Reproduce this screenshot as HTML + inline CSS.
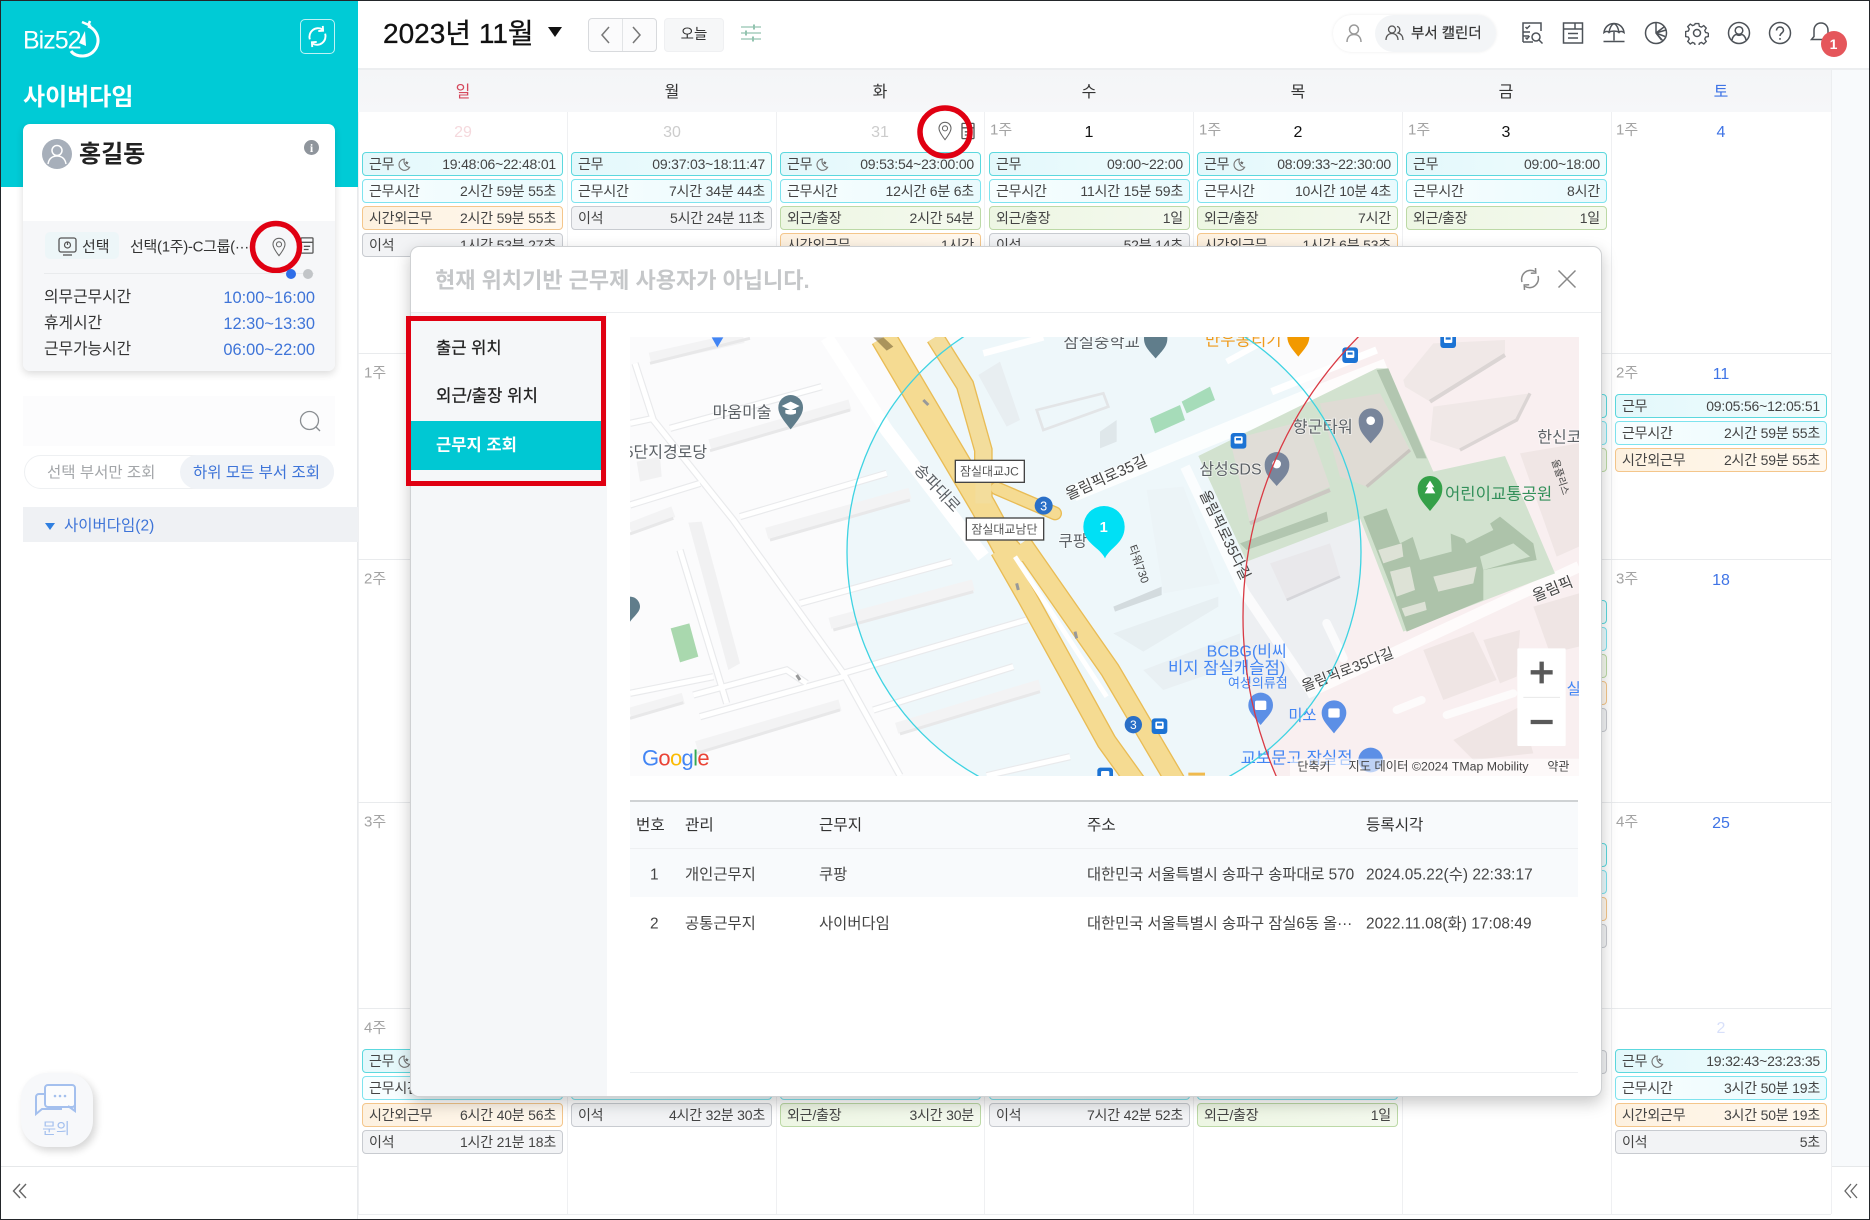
<!DOCTYPE html>
<html lang="ko"><head><meta charset="utf-8"><title>Biz52</title>
<style>
*{box-sizing:border-box}
html,body{margin:0;padding:0}
body{width:1870px;height:1220px;position:relative;overflow:hidden;background:#fff;font-family:"Liberation Sans","Noto Sans CJK KR",sans-serif;color:#333}
.a{position:absolute}
.t{position:absolute;white-space:nowrap;line-height:1;transform:translateY(calc(-50% + 2px))}
.c{transform:translate(-50%,calc(-50% + 2px))}
.e{position:absolute;height:24px;width:201px;display:flex;justify-content:space-between;align-items:center;padding:0 6px 0 6px;border-radius:4px;font-size:14px;color:#444;border:1.5px solid;white-space:nowrap;letter-spacing:-.2px}
.e span{display:flex;align-items:center;gap:2px}
.e svg{width:15px;height:15px}
.w{border-color:#5cd8de;background:linear-gradient(90deg,#e3f8fb,#f0fcfd)}
.h{border-color:#7ee3ee;background:linear-gradient(90deg,#f8feff,#e9fafd)}
.o{border-color:#f4c68b;background:linear-gradient(90deg,#fdf1e0,#fff8ee)}
.g{border-color:#bcd9a6;background:linear-gradient(90deg,#edf6e3,#f4f9ee)}
.i{border-color:#c8cbd0;background:#f2f3f5}
.sat{width:212px}
.wk{position:absolute;font-size:15px;color:#a3a3a3;line-height:1;transform:translateY(calc(-50% + 1px))}
.n{position:absolute;font-size:16px;line-height:1;transform:translate(-50%,calc(-50% + 2px));white-space:nowrap}
.vl{position:absolute;top:112px;bottom:6px;width:1px;background:#eff0f2}
.hl{position:absolute;left:358px;width:1473px;height:1px;background:#e9ebed}
.dn{position:absolute;top:91px;font-size:16px;transform:translate(-50%,calc(-50% + 2px));line-height:1;color:#333}
.hi{position:absolute;top:21px;width:24px;height:24px}
.hi *{fill:none;stroke:#4d5258;stroke-width:1.5}
.th{font-size:15.6px;color:#333}
.td{font-size:15.4px;color:#444}
</style></head><body>
<svg width="0" height="0" style="position:absolute"><defs>
<symbol id="moon" viewBox="0 0 16 16"><path d="M9 2.2A6 6 0 1 0 14.5 11 6.5 6.5 0 0 1 9 2.2Z" fill="none" stroke="#777" stroke-width="1.2"/><path d="M11.5 4l.6 1.4 1.5.1-1.1 1 .4 1.5-1.4-.8-1.3.8.3-1.5-1.1-1 1.5-.1Z" fill="#666"/></symbol>
<symbol id="pin" viewBox="0 0 24 30" preserveAspectRatio="none"><path d="M12 2C6.5 2 3 6 3 11c0 6 9 17 9 17s9-11 9-17c0-5-3.500-9-9-9Z" fill="none" stroke="#666" stroke-width="1.6"/><circle cx="12" cy="11" r="3.800" fill="none" stroke="#666" stroke-width="1.6"/></symbol>
<symbol id="doc" viewBox="0 0 20 24"><rect x="2.500" y="2.500" width="15" height="19" fill="none" stroke="#555" stroke-width="1.6" rx="1"/><path d="M2.500 8H17.500M6 13H14M6 17H12" stroke="#555" stroke-width="1.6" fill="none"/></symbol>
</defs></svg>

<!-- calendar -->
<div class="a" style="left:358px;top:69px;width:1473px;height:43px;background:linear-gradient(#f4f5f7,#f6f7f9)"></div>
<div class="a" style="left:1831px;top:69px;width:39px;height:1097px;background:#f8fafc"></div>
<div class="a" style="left:1831px;top:1166px;width:39px;height:1px;background:#e6e8ea"></div>
<div class="a" style="left:1831px;top:69px;width:1px;height:1097px;background:#eceef0"></div>
<div class="a" style="left:358px;top:68px;width:1512px;height:2px;background:#eceef0"></div>
<div class="vl" style="left:358px"></div><div class="vl" style="left:567px"></div><div class="vl" style="left:776px"></div><div class="vl" style="left:984px"></div><div class="vl" style="left:1193px"></div><div class="vl" style="left:1402px"></div><div class="vl" style="left:1611px"></div><div class="vl" style="left:1831px"></div>
<div class="hl" style="top:353px"></div><div class="hl" style="top:559px"></div><div class="hl" style="top:802px"></div><div class="hl" style="top:1008px"></div>
<div class="a" style="left:358px;top:1214px;width:1473px;height:1px;background:#eceef0"></div>

<div class="dn" style="left:463px;color:#d5485c">일</div><div class="dn" style="left:672px">월</div><div class="dn" style="left:880px">화</div><div class="dn" style="left:1089px">수</div><div class="dn" style="left:1298px">목</div><div class="dn" style="left:1506px">금</div><div class="dn" style="left:1721px;color:#3f74e6">토</div>

<div class="n" style="left:463px;top:131px;color:#f5d9dd">29</div><div class="n" style="left:672px;top:131px;color:#ccc">30</div><div class="n" style="left:880px;top:131px;color:#ccc">31</div>
<div class="wk" style="left:990px;top:129px">1주</div><div class="n" style="left:1089px;top:131px;color:#111">1</div>
<div class="wk" style="left:1199px;top:129px">1주</div><div class="n" style="left:1298px;top:131px;color:#111">2</div>
<div class="wk" style="left:1408px;top:129px">1주</div><div class="n" style="left:1506px;top:131px;color:#111">3</div>
<div class="wk" style="left:1616px;top:129px">1주</div><div class="n" style="left:1721px;top:131px;color:#3f74e6">4</div>
<div class="wk" style="left:1616px;top:372px">2주</div><div class="n" style="left:1721px;top:373px;color:#3f74e6">11</div>
<div class="wk" style="left:1616px;top:578px">3주</div><div class="n" style="left:1721px;top:579px;color:#3f74e6">18</div>
<div class="wk" style="left:1616px;top:821px">4주</div><div class="n" style="left:1721px;top:822px;color:#3f74e6">25</div>
<div class="n" style="left:1721px;top:1027px;color:#d8e0fa">2</div>
<div class="wk" style="left:364px;top:372px">1주</div><div class="wk" style="left:364px;top:578px">2주</div><div class="wk" style="left:364px;top:821px">3주</div><div class="wk" style="left:364px;top:1027px">4주</div>

<!-- row 1 -->
<div class="e w" style="left:362px;top:152px"><span>근무<svg><use href="#moon"/></svg></span><span>19:48:06~22:48:01</span></div>
<div class="e h" style="left:362px;top:179px"><span>근무시간</span><span>2시간 59분 55초</span></div>
<div class="e o" style="left:362px;top:206px"><span>시간외근무</span><span>2시간 59분 55초</span></div>
<div class="e i" style="left:362px;top:233px"><span>이석</span><span>1시간 53분 27초</span></div>
<div class="e w" style="left:571px;top:152px"><span>근무</span><span>09:37:03~18:11:47</span></div>
<div class="e h" style="left:571px;top:179px"><span>근무시간</span><span>7시간 34분 44초</span></div>
<div class="e i" style="left:571px;top:206px"><span>이석</span><span>5시간 24분 11초</span></div>
<div class="e w" style="left:780px;top:152px"><span>근무<svg><use href="#moon"/></svg></span><span>09:53:54~23:00:00</span></div>
<div class="e h" style="left:780px;top:179px"><span>근무시간</span><span>12시간 6분 6초</span></div>
<div class="e g" style="left:780px;top:206px"><span>외근/출장</span><span>2시간 54분</span></div>
<div class="e o" style="left:780px;top:233px"><span>시간외근무</span><span>1시간</span></div>
<div class="e w" style="left:989px;top:152px"><span>근무</span><span>09:00~22:00</span></div>
<div class="e h" style="left:989px;top:179px"><span>근무시간</span><span>11시간 15분 59초</span></div>
<div class="e g" style="left:989px;top:206px"><span>외근/출장</span><span>1일</span></div>
<div class="e i" style="left:989px;top:233px"><span>이석</span><span>52분 14초</span></div>
<div class="e w" style="left:1197px;top:152px"><span>근무<svg><use href="#moon"/></svg></span><span>08:09:33~22:30:00</span></div>
<div class="e h" style="left:1197px;top:179px"><span>근무시간</span><span>10시간 10분 4초</span></div>
<div class="e g" style="left:1197px;top:206px"><span>외근/출장</span><span>7시간</span></div>
<div class="e o" style="left:1197px;top:233px"><span>시간외근무</span><span>1시간 6분 53초</span></div>
<div class="e w" style="left:1406px;top:152px"><span>근무</span><span>09:00~18:00</span></div>
<div class="e h" style="left:1406px;top:179px"><span>근무시간</span><span>8시간</span></div>
<div class="e g" style="left:1406px;top:206px"><span>외근/출장</span><span>1일</span></div>
<!-- sat week 2 -->
<div class="e w sat" style="left:1615px;top:394px"><span>근무</span><span>09:05:56~12:05:51</span></div>
<div class="e h sat" style="left:1615px;top:421px"><span>근무시간</span><span>2시간 59분 55초</span></div>
<div class="e o sat" style="left:1615px;top:448px"><span>시간외근무</span><span>2시간 59분 55초</span></div>
<!-- peeks fri -->
<div class="e w" style="left:1406px;top:394px"></div><div class="e h" style="left:1406px;top:421px"></div><div class="e g" style="left:1406px;top:448px"></div>
<div class="e w" style="left:1406px;top:600px"></div><div class="e h" style="left:1406px;top:627px"></div><div class="e g" style="left:1406px;top:654px"></div><div class="e o" style="left:1406px;top:681px"></div><div class="e i" style="left:1406px;top:708px"></div>
<div class="e w" style="left:1406px;top:843px"></div><div class="e h" style="left:1406px;top:870px"></div><div class="e o" style="left:1406px;top:897px"></div><div class="e i" style="left:1406px;top:924px"></div>
<div class="e i" style="left:1406px;top:1050px"></div>
<!-- week 5 -->
<div class="e w" style="left:362px;top:1049px"><span>근무<svg><use href="#moon"/></svg></span><span></span></div>
<div class="e h" style="left:362px;top:1076px"><span>근무시간</span></div>
<div class="e o" style="left:362px;top:1103px"><span>시간외근무</span><span>6시간 40분 56초</span></div>
<div class="e i" style="left:362px;top:1130px"><span>이석</span><span>1시간 21분 18초</span></div>
<div class="e h" style="left:571px;top:1076px"></div><div class="e i" style="left:571px;top:1103px"><span>이석</span><span>4시간 32분 30초</span></div>
<div class="e h" style="left:780px;top:1076px"></div><div class="e g" style="left:780px;top:1103px"><span>외근/출장</span><span>3시간 30분</span></div>
<div class="e h" style="left:989px;top:1076px"></div><div class="e i" style="left:989px;top:1103px"><span>이석</span><span>7시간 42분 52초</span></div>
<div class="e h" style="left:1197px;top:1076px"></div><div class="e g" style="left:1197px;top:1103px"><span>외근/출장</span><span>1일</span></div>
<div class="e w sat" style="left:1615px;top:1049px"><span>근무<svg><use href="#moon"/></svg></span><span>19:32:43~23:23:35</span></div>
<div class="e h sat" style="left:1615px;top:1076px"><span>근무시간</span><span>3시간 50분 19초</span></div>
<div class="e o sat" style="left:1615px;top:1103px"><span>시간외근무</span><span>3시간 50분 19초</span></div>
<div class="e i sat" style="left:1615px;top:1130px"><span>이석</span><span>5초</span></div>

<svg class="a" style="left:937px;top:121px" width="16" height="20"><use href="#pin" width="16" height="20"/></svg>
<svg class="a" style="left:960px;top:120px" width="16" height="22" viewBox="0 0 20 24"><use href="#doc"/></svg>
<svg class="a" style="left:917px;top:103px;overflow:visible" width="60" height="58"><ellipse cx="28" cy="29" rx="25" ry="24" fill="none" stroke="#e00012" stroke-width="5.500"/></svg>
<svg class="a" style="left:1843px;top:1182px" width="16" height="18"><path d="M8 2L2 9l6 7M14 2L8 9l6 7" fill="none" stroke="#666" stroke-width="1.300"/></svg>

<!-- header -->
<div class="t" style="left:383px;top:32px;font-size:28px;color:#111;-webkit-text-stroke:.3px #111">2023년 11월</div>
<div class="a" style="left:548px;top:27px;width:0;height:0;border-left:7.500px solid transparent;border-right:7.500px solid transparent;border-top:10px solid #111"></div>
<div class="a" style="left:588px;top:18px;width:69px;height:34px;border:1.500px solid #d8dadd;border-radius:4px;background:#fbfbfc"></div>
<div class="a" style="left:622px;top:19px;width:1px;height:32px;background:#e2e4e6"></div>
<svg class="a" style="left:594px;top:24px" width="54" height="22"><path d="M15 3L8 11l7 8M39 3l7 8-7 8" fill="none" stroke="#777" stroke-width="1.500"/></svg>
<div class="a" style="left:664px;top:18px;width:60px;height:34px;border-radius:4px;background:#f6f7f8;border:1px solid #eff0f2"></div>
<div class="t c" style="left:694px;top:33px;font-size:14.500px;color:#333;position:absolute">오늘</div>
<svg class="a" style="left:739px;top:22px" width="24" height="22" viewBox="0 0 24 22"><path d="M2 5H22M2 11H22M2 17H22" stroke="#93c4b0" stroke-width="1.300"/><path d="M15 2.500V7.500M7 8.500V13.500M14 14.500V19.500" stroke="#93c4b0" stroke-width="2"/></svg>

<div class="a" style="left:1333px;top:15px;width:163px;height:37px;border-radius:19px;background:#fff;box-shadow:0 0 3px rgba(0,0,0,.08)"></div>
<div class="a" style="left:1375px;top:15px;width:121px;height:37px;border-radius:19px;background:#f3f5f7"></div>
<svg class="a" style="left:1345px;top:23px" width="18" height="20" viewBox="0 0 18 20"><circle cx="9" cy="6.500" r="4.500" fill="none" stroke="#999" stroke-width="1.500"/><path d="M2 19c0-5 3-7.500 7-7.500s7 2.500 7 7.500" fill="none" stroke="#999" stroke-width="1.500"/></svg>
<svg class="a" style="left:1385px;top:24px" width="20" height="18" viewBox="0 0 20 18"><circle cx="7" cy="5.500" r="3.500" fill="none" stroke="#555" stroke-width="1.300"/><path d="M1 16c0-4 2.500-6.500 6-6.500s6 2.500 6 6.500" fill="none" stroke="#555" stroke-width="1.300"/><path d="M12 2.500a3.500 3.500 0 0 1 1 6.500c3 .8 5 3 5 7" fill="none" stroke="#555" stroke-width="1.300"/></svg>
<div class="t" style="left:1411px;top:32px;font-size:14.500px;color:#333;-webkit-text-stroke:.2px #333">부서 캘린더</div>

<svg class="hi" style="left:1520px" viewBox="0 0 24 24"><path d="M3 21V2H21V10M3 11H10M3 15H9"/><path d="M5.500 6l1.500 1.500L10 4.500M5.500 16.500L7 18l2.500-3"/><path d="M3 21H13"/><circle cx="16" cy="16" r="4"/><path d="M19 19l3.500 3.500"/></svg>
<svg class="hi" style="left:1561px" viewBox="0 0 24 24"><rect x="2.500" y="2" width="19" height="20"/><path d="M2.500 8H21.500M7 12.500H17M7 17H17M14 2V8"/></svg>
<svg class="hi" style="left:1602px" viewBox="0 0 24 24"><path d="M12 2.500C6 2.500 2.500 7 2 11.500c2-1.500 4-1.500 5 0 1.500-1.800 8.500-1.800 10 0 1-1.500 3-1.500 5 0-.5-4.500-4-9-10-9Z"/><path d="M12 2.500C9 4 7.500 8 7 11.500M12 2.500c3 1.500 4.500 5.500 5 9M12 11v8.500M1.500 20.500H22.500"/></svg>
<svg class="hi" style="left:1644px" viewBox="0 0 24 24"><circle cx="12" cy="12" r="10.500"/><path d="M12 1.500V12l7 8M12 12L22 9M12 12l9 3.500M12 12l5.500 7M12 12l8-6"/></svg>
<svg class="hi" style="left:1685px" viewBox="0 0 24 24"><circle cx="12" cy="12" r="3.500"/><path d="M10 1.500h4l.6 3 2.300 1 2.600-1.700 2.800 2.800-1.700 2.600 1 2.300 3 .6v-.1 3.900l-3 .6-1 2.300 1.700 2.600-2.800 2.800-2.600-1.700-2.300 1-.6 3h-4l-.6-3-2.300-1-2.600 1.700-2.800-2.800 1.700-2.600-1-2.300-3-.6V10.400l3-.6 1-2.300-1.700-2.600 2.800-2.800 2.600 1.700 2.300-1Z" transform="translate(1.200 1.200) scale(.9)"/></svg>
<svg class="hi" style="left:1727px" viewBox="0 0 24 24"><circle cx="12" cy="12" r="10.500"/><circle cx="12" cy="9.500" r="3.800"/><path d="M5 19c.5-3.500 3-5.500 4.500-5.500 1.500 1 3.500 1 5 0C16 13.500 18.500 15.500 19 19"/></svg>
<svg class="hi" style="left:1768px" viewBox="0 0 24 24"><circle cx="12" cy="12" r="10.500"/><path d="M8.500 9.500c0-2 1.500-3.500 3.500-3.500s3.500 1.500 3.500 3.300c0 2.700-3.500 2.700-3.500 5.700"/><path d="M12 17v1.800" stroke-width="2"/></svg>
<svg class="hi" style="left:1809px" viewBox="0 0 24 24"><path d="M12 2c-4.500 0-7 3.500-7 7.500v6L2.500 18.500h19L19 15.500v-6C19 5.500 16.500 2 12 2Z"/></svg>
<div class="a" style="left:1820.500px;top:30.500px;width:26px;height:26px;border-radius:50%;background:#e5565b"></div>
<div class="n" style="left:1833.500px;top:41.500px;color:#fff;font-size:14px;font-weight:700">1</div>

<!-- modal -->
<div class="a" style="left:410px;top:246px;width:1192px;height:851px;background:#fff;border:1px solid #cfd1d3;border-radius:9px;box-shadow:0 6px 16px rgba(0,0,0,.22);overflow:hidden">
  <div class="a" style="left:0;top:65px;right:0;height:1px;background:#eceef0"></div>
  <div class="a" style="left:0;top:66px;width:196px;bottom:0;background:#f5f7f9"></div>
  <div class="a" style="left:0;top:174px;width:195px;height:49px;background:#00c8d3"></div>
</div>
<div class="t" style="left:435px;top:279px;font-size:22px;font-weight:700;color:#c5c7c9">현재 위치기반 근무제 사용자가 아닙니다.</div>
<svg class="a" style="left:1518px;top:267px" width="24" height="24" viewBox="0 0 24 24"><path d="M4 15a9 9 0 0 1 13-10.500M20 9a9 9 0 0 1-13 10.500" fill="none" stroke="#888" stroke-width="1.500"/><path d="M17.500 1l.3 5-5 .3M6.500 23l-.3-5 5-.3" fill="none" stroke="#888" stroke-width="1.500"/></svg>
<svg class="a" style="left:1557px;top:269px" width="20" height="20"><path d="M1.500 1.500l17 17M18.500 1.500l-17 17" stroke="#888" stroke-width="1.500"/></svg>
<div class="t" style="left:436px;top:347px;font-size:16.600px;color:#222;-webkit-text-stroke:.25px #222">출근 위치</div>
<div class="t" style="left:436px;top:395px;font-size:16.800px;color:#222;-webkit-text-stroke:.25px #222">외근/출장 위치</div>
<div class="t" style="left:436px;top:444px;font-size:16.600px;color:#fff;font-weight:700">근무지 조회</div>
<div class="a" style="left:406px;top:316px;width:200px;height:170px;border:5px solid #e00012"></div>

<!-- map -->
<svg class="a" style="left:630px;top:337px;font-family:'Liberation Sans','Noto Sans CJK KR',sans-serif" width="949" height="439" viewBox="630 337 949 439">
<defs>
<style>
.bl{fill:none;stroke:#f3f3f4;stroke-width:34}
.bd{fill:none;stroke:#e8e8e9;stroke-width:9}
.rd{fill:none;stroke:#e9eaec;stroke-width:22}
.rw{fill:none;stroke:#fff;stroke-width:15}
.l{font-size:48px;fill:#5c6166;paint-order:stroke;stroke:#fff;stroke-width:5px;stroke-opacity:.6}
.bu{fill:#1c73d4}
</style>
</defs>
<rect x="630" y="337" width="949" height="439" fill="#fbfbfc"/>
<circle cx="1641" cy="617" r="398" fill="#f6dcdc" fill-opacity=".36"/>
<circle cx="1104" cy="552" r="257" fill="#d6eff6" fill-opacity=".34"/>

<g transform="translate(630 330) scale(.33333)">
 <path class="bl" d="M60 85L340 22M240 345L660 225M410 610L840 490M600 880L1030 765M800 1195L1230 1065M200 1250L630 1125M0 1150L160 1105M0 595L130 545"/>
 <path class="bd" d="M60 100L360 25M240 362L660 240M420 630L840 510M610 900L1030 785M810 1212L1230 1085M200 1270L630 1140M0 1165L160 1118M0 612L130 565"/>
 <path d="M175 578L215 575L330 1000L295 1020Z" fill="#f1f1f2"/>
 <path d="M20 395L90 380L95 440L30 455Z" fill="#f1f1f2"/>
 <path d="M1045 135L1110 95L1170 270L1130 290Z" fill="#e8eef1"/>
 <path d="M122 895L178 880L205 980L150 997Z" fill="#a9d8ae"/>
 <path class="rd" d="M15 100L70 270L310 570L640 1030L810 1337M120 295L575 170M0 280L70 265M0 525L210 460M330 560L770 430M510 820L965 695M640 1030L1190 870M210 1160L640 1040M150 660L290 1120M190 1095L470 1020L530 1060M0 1090L250 1040M730 1140L1150 1010M1070 1337L1320 1280"/>
 <path class="rw" d="M15 100L70 270L310 570L640 1030L810 1337M120 295L575 170M0 280L70 265M0 525L210 460M330 560L770 430M510 820L965 695M640 1030L1190 870M210 1160L640 1040M150 660L290 1120M190 1095L470 1020L530 1060M0 1090L250 1040M730 1140L1150 1010M1070 1337L1320 1280"/>
 <path d="M590 22L770 300L1060 680" fill="none" stroke="#fff" stroke-width="40"/>
 <path d="M1220 240L1420 190L1435 230L1240 300Z" fill="none" stroke="#e3e5e7" stroke-width="8"/>
 <path d="M1060 70L1240 22" fill="none" stroke="#fff" stroke-width="20"/>
 <!-- highway -->
 <path d="M760 22L1060 530L1125 650L1170 700" fill="none" stroke="#e9bc55" stroke-width="80"/>
 <path d="M915 22L1005 165L1060 360L1060 520" fill="none" stroke="#e9bc55" stroke-width="56"/>
 <path d="M1100 475L1275 550" fill="none" stroke="#e9bc55" stroke-width="42" stroke-linecap="round"/>
 <path d="M1110 660L1190 800L1430 1235L1520 1360" fill="none" stroke="#e9bc55" stroke-width="62"/>
 <path d="M1175 640L1440 1020L1640 1360" fill="none" stroke="#e9bc55" stroke-width="62"/>
 <path d="M760 22L1060 530L1125 650L1170 700" fill="none" stroke="#f5db92" stroke-width="72"/>
 <path d="M915 22L1005 165L1060 360L1060 520" fill="none" stroke="#f3dd9c" stroke-width="48"/>
 <path d="M1100 475L1275 550" fill="none" stroke="#f5db92" stroke-width="34" stroke-linecap="round"/>
 <path d="M1110 660L1190 800L1430 1235L1520 1360" fill="none" stroke="#f5db92" stroke-width="54"/>
 <path d="M1175 640L1440 1020L1640 1360" fill="none" stroke="#f5db92" stroke-width="54"/>
 <path d="M1155 680L1430 1100" fill="none" stroke="#fff" stroke-width="14"/>
 <path d="M895 225L880 210M1160 760L1165 780M1335 905L1340 925M500 1035L510 1050" stroke="#98999a" stroke-width="9" fill="none"/>
 <path d="M730 22L760 22L790 50L770 62Z" fill="#6b5a2f" opacity=".55"/>
 <path d="M245 22H280L262 52Z" fill="#4285f4"/>
 <text class="l" x="248" y="262">마움미술</text>
 <path d="M482 298C455 265 445 250 445 232a37 37 0 0 1 74 0C519 250 509 265 482 298Z" fill="#607d8b"/><path d="M455 228l27-13 27 13-27 13Z" fill="#fff"/><path d="M466 240v10q16 8 32 0v-10" fill="#fff"/>
 <text class="l" x="-16" y="382">5단지경로당</text>
 <path d="M-2 880C-5 865 -30 850 -30 830a30 30 0 0 1 60 0C30 850 2 865 -2 880Z" fill="#607d8b"/>
 <text class="l" transform="translate(850 420) rotate(47)">송파대로</text>
 <rect x="976" y="391" width="207" height="66" fill="#fff" stroke="#444" stroke-width="4"/><text x="990" y="437" font-size="36" fill="#555">잠실대교JC</text>
 <rect x="1009" y="564" width="232" height="66" fill="#fff" stroke="#444" stroke-width="4"/><text x="1024" y="610" font-size="36" fill="#555">잠실대교남단</text>
 <circle cx="1241" cy="527" r="27" fill="#2a6fc7"/><text x="1241" y="541" font-size="38" fill="#fff" text-anchor="middle">3</text>
 <text class="l" x="1285" y="650" style="font-size:47px">쿠팡</text>
 <!-- Google -->
 <text x="36" y="1306" font-size="66" style="letter-spacing:-2px;font-weight:400"><tspan fill="#4285f4">G</tspan><tspan fill="#ea4335">o</tspan><tspan fill="#fbbc05">o</tspan><tspan fill="#4285f4">g</tspan><tspan fill="#34a853">l</tspan><tspan fill="#ea4335">e</tspan></text>
</g>

<g transform="translate(1100 330) scale(.33333)">
 <!-- roads -->
 <path d="M-80 490L630 200L860 110" fill="none" stroke="#fff" stroke-width="50" opacity=".8"/>
 <path d="M515 185L830 60" fill="none" stroke="#fff" stroke-width="22"/>
 <path d="M255 410L435 790L630 1080" fill="none" stroke="#fff" stroke-width="30" opacity=".75"/>
 <path d="M620 1090L1437 710" fill="none" stroke="#fff" stroke-width="34" opacity=".75"/>
 <!-- pink buildings -->
 <path d="M910 150L1000 40L1215 30V75L990 215L915 170Z" fill="#f0e8e7"/><path d="M990 215L1215 75" stroke="#dbd5d4" stroke-width="12"/>
 <path d="M990 330L1000 230L1290 190L1250 270L1080 360Z" fill="#f0e8e7"/><path d="M1080 360L1250 270L1290 190" stroke="#dbd5d4" stroke-width="10" fill="none"/>
 <path d="M1260 370L1437 340V650L1370 680Z" fill="#f0e6e5"/>
 <path d="M970 960L1120 905L1190 1050L1030 1110Z" fill="#efe5e4"/>
 <path d="M1150 930L1260 900L1250 1040L1200 1060Z" fill="#efe5e4"/>
 <path d="M1300 830L1437 790V950L1350 970Z" fill="#efe5e4"/>
 <path d="M1060 1230L1260 1130L1300 1270L1120 1290Z" fill="#efe5e4"/>
 <!-- park -->
 <path d="M295 378L830 115H865L1000 425L1215 378L1365 730L910 905L780 565L440 695Z" fill="#d2e2cf"/>
 <path d="M390 330L620 270L690 470L450 580Z" fill="#e0ddd7"/>
 <path d="M450 580L690 480" stroke="#cbc8c2" stroke-width="12" fill="none"/>
 <path d="M660 220L840 190L930 360L800 470L720 440Z" fill="#dfdbd4"/>
 <path d="M800 470L930 360" stroke="#c9c5bf" stroke-width="10"/>
 <path d="M830 120L865 115L980 385L950 385Z" fill="#b2c6b0"/>
 <path d="M420 640L680 545L685 575L440 660Z" fill="#b2c6b0"/>
 <path d="M790 560L860 535L900 640L1000 590L1100 630L1200 560L1300 640L1310 690L1150 720L1150 810L920 905L880 790Z" fill="#adc3aa"/>
 <path d="M930 595L1050 570L1055 665L960 690Z" fill="#d2e2cf"/><path d="M1060 570L1150 540L1180 600L1100 640Z" fill="#d2e2cf"/><path d="M1140 680L1240 640L1290 680L1150 720Z" fill="#d2e2cf"/>
 <path d="M835 660L905 640L910 680L850 700ZM870 725L930 710L945 780L890 800ZM905 835L975 815L980 840L915 860ZM1000 740L1130 710L1120 760L1015 785Z" fill="#dde2d6"/>
 <path d="M510 700L690 640L720 740L560 810Z" fill="#e9e8eb"/>
 <path d="M560 810L720 740" stroke="#d6d6da" stroke-width="8"/>
 <!-- left bldgs -->
 <path d="M150 265L240 225L255 270L165 310Z" fill="#a6dcb9"/><path d="M245 215L330 170L345 210L260 250Z" fill="#a6dcb9"/>
 <path d="M140 480L250 470L360 760L190 790Z" fill="#ecf4f7"/>
 <path d="M40 910L355 800V830L130 965Z" fill="#e7eff2"/>
 <path d="M130 1020L420 910V1000L190 1080Z" fill="#e9f0f3"/>
 <path d="M40 830L185 770V795L45 845Z" fill="#d3dbde"/>
 <path d="M0 305L50 270V335L0 355Z" fill="#dfe7ea"/>
 <path d="M380 95L480 40" stroke="#fff" stroke-width="18"/>
 <path d="M680 880L730 985" stroke="#fff" stroke-width="26" stroke-linecap="round" opacity=".8"/>
 <path d="M890 1140L965 1110M1040 1155L1240 1090" stroke="#fff" stroke-width="24" stroke-linecap="round" opacity=".75"/>
 <!-- labels -->
 <text class="l" x="-110" y="52" style="font-size:50px">잠실중학교</text>
 <path d="M167 85C145 60 132 48 132 25a35 35 0 0 1 70 0C202 48 189 60 167 85Z" fill="#607d8b"/>
 <text x="315" y="47" font-size="50" fill="#f09a1a">만우동티기</text>
 <path d="M595 80C575 55 562 42 562 20a33 33 0 0 1 66 0C628 42 615 55 595 80Z" fill="#f29900"/>
 <text class="l" transform="translate(-95 510) rotate(-24)" style="font-size:46px;fill:#444">올림픽로35길</text>
 <text transform="translate(85 650) rotate(70)" font-size="34" fill="#444">타워730</text>
 <text transform="translate(298 490) rotate(64)" font-size="44" fill="#444">올림픽로35다길</text>
 <text class="l" x="298" y="434">삼성SDS</text>
 <path d="M530 468C505 440 494 430 494 403a37 37 0 0 1 74 0C568 430 555 440 530 468Z" fill="#78859b"/><circle cx="530" cy="402" r="13" fill="#fff"/>
 <text class="l" x="578" y="307" style="font-size:49px">향군타워</text>
 <path d="M812 340C787 312 776 300 776 272a37 37 0 0 1 74 0C850 300 837 312 812 340Z" fill="#78859b"/><circle cx="812" cy="272" r="13" fill="#fff"/>
 <path d="M990 543C964 512 953 500 953 475a37 37 0 0 1 74 0C1027 500 1016 512 990 543Z" fill="#34a048"/><path d="M990 452l13 20h-7l10 18h-32l10-18h-7Z" fill="#fff"/>
 <text x="1035" y="508" font-size="50" fill="#33905a">어린이교통공원</text>
 <text class="l" x="1312" y="338">한신코</text>
 <text transform="translate(1355 392) rotate(72)" font-size="30" fill="#444">올플리스</text>
 <text class="l" transform="translate(1305 815) rotate(-22)" style="font-size:46px;fill:#444">올림픽</text>
 <text class="l" transform="translate(612 1085) rotate(-21)" style="font-size:44px;fill:#444">올림픽로35다길</text>
 <text x="320" y="980" font-size="48" fill="#4285f4">BCBG(비씨</text>
 <text x="204" y="1030" font-size="50" fill="#4285f4">비지 잠실캐슬점)</text>
 <text x="384" y="1072" font-size="39" fill="#4285f4">여성의류점</text>
 <path d="M482 1185C457 1155 445 1145 445 1125a37 37 0 0 1 74 0C519 1145 507 1155 482 1185Z" fill="#5c8fe6"/><rect x="465" y="1112" width="34" height="28" rx="5" fill="#fff"/>
 <text x="565" y="1172" font-size="46" fill="#4285f4">미쏘</text>
 <path d="M702 1210C677 1180 665 1168 665 1148a37 37 0 0 1 74 0C739 1168 727 1180 702 1210Z" fill="#5c8fe6"/><rect x="685" y="1135" width="34" height="28" rx="5" fill="#fff"/>
 <text x="422" y="1300" font-size="50" fill="#4285f4">교보문고 잠실점</text>
 <circle cx="812" cy="1290" r="37" fill="#5c8fe6"/>
 <text x="1400" y="1092" font-size="46" fill="#4285f4">실</text>
 <circle cx="100" cy="1184" r="26" fill="#2a6fc7"/><text x="100" y="1197" font-size="36" fill="#fff" text-anchor="middle">3</text>
 <path d="M265 1337V1328H315V1337Z" fill="#f0ba4e"/>
 <!-- bus -->
 <g><rect x="392" y="309" width="47" height="47" rx="9" class="bu"/><rect x="403" y="319" width="25" height="22" rx="4" fill="#fff"/><rect x="408" y="324" width="15" height="7" fill="#1c73d4"/></g>
 <g transform="translate(335 -257)"><rect x="392" y="309" width="47" height="47" rx="9" class="bu"/><rect x="403" y="319" width="25" height="22" rx="4" fill="#fff"/><rect x="408" y="324" width="15" height="7" fill="#1c73d4"/></g>
 <g transform="translate(629 -302)"><rect x="392" y="309" width="47" height="47" rx="9" class="bu"/><rect x="403" y="319" width="25" height="22" rx="4" fill="#fff"/><rect x="408" y="324" width="15" height="7" fill="#1c73d4"/></g>
 <g transform="translate(-237 856)"><rect x="392" y="309" width="47" height="47" rx="9" class="bu"/><rect x="403" y="319" width="25" height="22" rx="4" fill="#fff"/><rect x="408" y="324" width="15" height="7" fill="#1c73d4"/></g>
 <g transform="translate(-400 1004)"><rect x="392" y="309" width="47" height="47" rx="9" class="bu"/><rect x="403" y="319" width="25" height="22" rx="4" fill="#fff"/></g>
</g>
<circle cx="1104" cy="552" r="257" fill="none" stroke="#3ed3e2" stroke-width="1.300"/>
<circle cx="1641" cy="617" r="398" fill="none" stroke="#d93a44" stroke-width="1.300"/>
<g transform="translate(1100 330) scale(.33333)">
 <path d="M15 685C0 652 -50 640 -50 590a62 62 0 0 1 124 0C74 640 30 652 15 685Z" fill="#00e0f5"/>
 <text x="11" y="606" font-size="44" font-weight="700" fill="#fff" text-anchor="middle">1</text>
 <rect x="570" y="1286" width="867" height="52" fill="#fff" fill-opacity=".6"/>
 <text x="592" y="1322" font-size="36" fill="#444">단축키</text>
 <text x="745" y="1322" font-size="37" fill="#444">지도 데이터 ©2024 TMap Mobility</text>
 <text x="1342" y="1322" font-size="36" fill="#444">약관</text>
 <rect x="1252" y="955" width="145" height="293" fill="#fff" rx="3"/>
 <path d="M1270 1102H1380" stroke="#e8e8e8" stroke-width="3"/>
 <path d="M1292 1027H1358M1325 995V1060M1292 1176H1358" stroke="#595959" stroke-width="13" fill="none"/>
</g>
</svg>

<!-- table -->
<div class="a" style="left:630px;top:800px;width:948px;height:97px;background:#f8fafc"></div>
<div class="a" style="left:630px;top:800px;width:948px;height:2px;background:#cfd2d4"></div>
<div class="a" style="left:630px;top:848px;width:948px;height:1px;background:#eef0f2"></div>
<div class="a" style="left:630px;top:1072px;width:948px;height:1px;background:#eef0f2"></div>
<div class="t th" style="left:636px;top:824px">번호</div><div class="t th" style="left:685px;top:824px">관리</div><div class="t th" style="left:819px;top:824px">근무지</div><div class="t th" style="left:1087px;top:824px">주소</div><div class="t th" style="left:1366px;top:824px">등록시각</div>
<div class="t td" style="left:650px;top:873px">1</div><div class="t td" style="left:685px;top:873px">개인근무지</div><div class="t td" style="left:819px;top:873px">쿠팡</div><div class="t td" style="left:1087px;top:873px;letter-spacing:-.1px">대한민국 서울특별시 송파구 송파대로 570</div><div class="t td" style="left:1366px;top:873px;letter-spacing:.05px">2024.05.22(수) 22:33:17</div>
<div class="t td" style="left:650px;top:922px">2</div><div class="t td" style="left:685px;top:922px">공통근무지</div><div class="t td" style="left:819px;top:922px">사이버다임</div><div class="t td" style="left:1087px;top:922px;letter-spacing:-.1px">대한민국 서울특별시 송파구 잠실6동 올···</div><div class="t td" style="left:1366px;top:922px;letter-spacing:.05px">2022.11.08(화) 17:08:49</div>

<!-- sidebar -->
<div class="a" style="left:0;top:0;width:358px;height:1220px;background:#fff;border-right:1px solid #e8eaec"></div>
<div class="a" style="left:0;top:0;width:358px;height:187px;background:#00cbd6"></div>
<div class="t" style="left:23px;top:39px;font-size:25px;color:#fff;letter-spacing:-1px">Biz52</div>
<svg class="a" style="left:64px;top:18px" width="36" height="42" viewBox="0 0 36 42"><path d="M24 8A15.500 15.500 0 0 1 19 38C13 38 9 36 7 33" fill="none" stroke="#fff" stroke-width="3"/><path d="M18 4L27 8M24 8l2-5" stroke="#fff" stroke-width="2.500" fill="none"/><path d="M21 13l1 15-7-3Z" fill="#fff"/></svg>
<div class="a" style="left:300px;top:19px;width:35px;height:35px;border:1.500px solid rgba(255,255,255,.75);border-radius:5px"></div>
<svg class="a" style="left:306px;top:25px" width="23" height="23" viewBox="0 0 24 24"><path d="M4 15a9 9 0 0 1 13-10.500M20 9a9 9 0 0 1-13 10.500" fill="none" stroke="#fff" stroke-width="2"/><path d="M17.500 1l.3 5-5 .3M6.500 23l-.3-5 5-.3" fill="none" stroke="#fff" stroke-width="2"/></svg>
<div class="t" style="left:23px;top:96px;font-size:24px;font-weight:700;color:#fff">사이버다임</div>

<div class="a" style="left:23px;top:124px;width:312px;height:247px;border-radius:7px;background:#fff;box-shadow:0 3px 8px rgba(0,0,0,.14);overflow:hidden"><div class="a" style="left:0;top:97px;right:0;bottom:0;background:#f6f7f9"></div></div>
<svg class="a" style="left:42px;top:139px" width="30" height="30" viewBox="0 0 30 30"><circle cx="15" cy="15" r="15" fill="#a7afba"/><circle cx="15" cy="11.500" r="5" fill="none" stroke="#fff" stroke-width="1.500"/><path d="M6 25c1-6 5-8 9-8s8 2 9 8" fill="none" stroke="#fff" stroke-width="1.500"/></svg>
<div class="t" style="left:79px;top:153px;font-size:24px;font-weight:700;color:#222">홍길동</div>
<div class="a" style="left:304px;top:140px;width:15px;height:15px;border-radius:50%;background:#8f959c"></div>
<div class="n" style="left:311.500px;top:145.500px;font-size:12px;font-weight:700;color:#fff;font-family:'Liberation Serif',serif">i</div>
<div class="a" style="left:45px;top:232px;width:74px;height:27px;background:#edf6f8;border-radius:5px"></div>
<svg class="a" style="left:58px;top:237px" width="19" height="19" viewBox="0 0 19 19"><rect x="1" y="1" width="17" height="14" rx="2" fill="none" stroke="#555" stroke-width="1.300"/><path d="M5 18H14" stroke="#555" stroke-width="1.300"/><circle cx="9.500" cy="8" r="3" fill="none" stroke="#555" stroke-width="1.200"/><path d="M9.500 4.500V8" stroke="#555" stroke-width="1.200"/></svg>
<div class="t" style="left:82px;top:245px;font-size:15px;color:#333">선택</div>
<div class="t" style="left:130px;top:245px;font-size:15px;color:#333;letter-spacing:-.3px">선택(1주)-C그룹(···</div>
<svg class="a" style="left:271px;top:237px" width="16" height="20"><use href="#pin" width="16" height="20"/></svg>
<svg class="a" style="left:299px;top:234px" width="16" height="23" viewBox="0 0 20 24"><use href="#doc"/></svg>
<svg class="a" style="left:248px;top:217px;overflow:visible" width="60" height="60"><circle cx="28" cy="30" r="23.500" fill="none" stroke="#e00012" stroke-width="5.500"/></svg>
<div class="a" style="left:44px;top:273px;width:270px;height:1px;background:#e9ebed"></div>
<div class="a" style="left:286px;top:268.500px;width:10px;height:10px;border-radius:50%;background:#2f6ee8"></div>
<div class="a" style="left:303px;top:268.500px;width:10px;height:10px;border-radius:50%;background:#c2c5c8"></div>
<div class="t" style="left:44px;top:296px;font-size:15.800px;color:#333">의무근무시간</div><div class="t" style="right:1555px;top:295.500px;font-size:16.400px;color:#3e74d8">10:00~16:00</div>
<div class="t" style="left:44px;top:322px;font-size:15.800px;color:#333">휴게시간</div><div class="t" style="right:1555px;top:321.500px;font-size:16.400px;color:#3e74d8">12:30~13:30</div>
<div class="t" style="left:44px;top:348px;font-size:15.800px;color:#333">근무가능시간</div><div class="t" style="right:1555px;top:347.500px;font-size:16.400px;color:#3e74d8">06:00~22:00</div>

<div class="a" style="left:23px;top:396px;width:312px;height:50px;background:#fcfcfd"></div>
<svg class="a" style="left:299px;top:410px" width="23" height="23"><circle cx="10.500" cy="10.500" r="9" fill="none" stroke="#8a8e92" stroke-width="1.300"/><path d="M17 17l4 4" stroke="#8a8e92" stroke-width="1.300"/></svg>
<div class="a" style="left:24px;top:455px;width:310px;height:34px;border-radius:17px;background:#fff;border:1px solid #eef0f2"></div>
<div class="a" style="left:180px;top:455px;width:154px;height:34px;border-radius:17px;background:#f0f3f7"></div>
<div class="t" style="left:47px;top:471px;font-size:15.500px;color:#a3a6a9">선택 부서만 조회</div>
<div class="t" style="left:193px;top:471px;font-size:15.500px;color:#3e74d8">하위 모든 부서 조회</div>
<div class="a" style="left:23px;top:507px;width:335px;height:35px;background:#eff1f4"></div>
<div class="a" style="left:44.500px;top:523px;width:0;height:0;border-left:5px solid transparent;border-right:5px solid transparent;border-top:7px solid #2f7fe0"></div>
<div class="t" style="left:64px;top:524px;font-size:15.500px;color:#3e74d8">사이버다임(2)</div>

<div class="a" style="left:21px;top:1073px;width:72px;height:74px;border-radius:26px;background:#f7f8fa;box-shadow:3px 4px 8px rgba(0,0,0,.16)"></div>
<svg class="a" style="left:34px;top:1082px" width="44" height="38" viewBox="0 0 44 38"><rect x="11" y="3" width="30" height="22" rx="3" fill="#fbfcfd" stroke="#a4c0ee" stroke-width="2"/><path d="M41 20v9l-7-5" fill="none" stroke="#a4c0ee" stroke-width="2"/><path d="M10 12H5a3 3 0 0 0-3 3v17l6-5h20" fill="none" stroke="#a4c0ee" stroke-width="2"/><circle cx="21" cy="14" r="1.300" fill="#a4c0ee"/><circle cx="26" cy="14" r="1.300" fill="#a4c0ee"/><circle cx="31" cy="14" r="1.300" fill="#a4c0ee"/></svg>
<div class="t c" style="left:56px;top:1127px;font-size:15px;color:#a4c0ee;position:absolute">문의</div>
<div class="a" style="left:0;top:1166px;width:358px;height:1px;background:#e6e8ea"></div>
<svg class="a" style="left:11px;top:1182px" width="18" height="18"><path d="M9 2L2.500 9 9 16M15 2L8.500 9 15 16" fill="none" stroke="#666" stroke-width="1.400"/></svg>

<!-- frame -->
<div class="a" style="left:0;top:0;width:1870px;height:1px;background:#23262a"></div>
<div class="a" style="left:0;top:1219px;width:1870px;height:1px;background:#23262a"></div>
<div class="a" style="left:0;top:0;width:1px;height:1220px;background:#23262a"></div>
<div class="a" style="left:1869px;top:0;width:1px;height:1220px;background:#23262a"></div>
</body></html>
